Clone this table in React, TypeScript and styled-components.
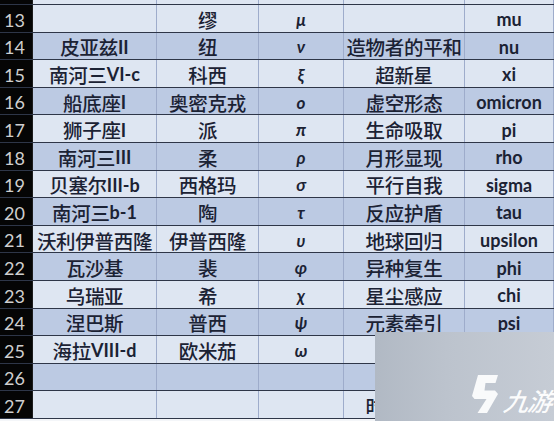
import React from 'react';
import styled, { createGlobalStyle } from 'styled-components';

const GlobalStyle = createGlobalStyle`
  html, body {
    margin: 0;
    padding: 0;
    background: #f4f6f9;
    overflow: hidden;
  }
`;

const Page = styled.div`
  position: relative;
  width: 554px;
  height: 421px;
  overflow: hidden;
  background: #f4f6f9;
`;

const Sheet = styled.div`
  display: flex;
  flex-direction: column;
  width: 600px;
`;

const Row = styled.div<{ $shade: boolean; $h: number }>`
  display: grid;
  grid-template-columns: 33px 124px 102px 85px 121px 89px 1fr;
  height: ${(p) => p.$h}px;
  background: ${(p) => (p.$shade ? '#bccae3' : '#dee6f2')};
  border-bottom: 1px solid #2e3648;
  box-sizing: border-box;
`;

const RowHead = styled.div`
  display: flex;
  align-items: flex-end;
  padding: 0 0 1px 4px;
  background: #050505;
  color: #cfcfcf;
  font-family: 'Lato', 'Liberation Sans', sans-serif;
  font-size: 18px;
  line-height: 22px;
  border-right: 1px solid #1c1c1c;
  overflow: hidden;
`;

const Cell = styled.div<{ $kind?: 'cn' | 'greek' | 'latin' }>`
  display: flex;
  align-items: center;
  justify-content: center;
  overflow: hidden;
  white-space: nowrap;
  border-right: 1px solid #9eaccb;
  color: #1b2234;
  font-family: ${(p) =>
    p.$kind === 'greek'
      ? "'Lato', 'DejaVu Sans', sans-serif"
      : "'Lato', 'Noto Sans CJK SC', sans-serif"};
  font-size: ${(p) => (p.$kind === 'greek' ? '17px' : p.$kind === 'latin' ? '18px' : '19.5px')};
  font-weight: ${(p) => (p.$kind === 'cn' ? 500 : 700)};
  font-style: ${(p) => (p.$kind === 'greek' ? 'italic' : 'normal')};
  letter-spacing: ${(p) => (p.$kind === 'cn' ? '-0.3px' : '0')};
  padding-top: 2px;
`;

const Latin = styled.span`
  font-family: 'Lato', 'Liberation Sans', sans-serif;
  font-weight: 700;
  font-size: 18px;
  letter-spacing: 0;
`;

// blurred watermark patch laid over the bottom-right corner of the photo
const Watermark = styled.div`
  position: absolute;
  left: 375px;
  top: 332px;
  width: 179px;
  height: 89px;
  box-sizing: border-box;
  display: flex;
  align-items: flex-end;
  justify-content: flex-end;
  gap: 6px;
  padding: 0 2px 8px 0;
  background-color: #bcc3cd;
  background-image: linear-gradient(90deg, #b1b9c4 0%, #bcc3cd 40%, #c6ccd5 100%);
  z-index: 2;
`;

const Brand = styled.span`
  color: #ffffff;
  font-family: 'Noto Sans CJK SC', sans-serif;
  font-size: 25px;
  font-weight: 500;
  font-style: italic;
  line-height: 26px;
  letter-spacing: -1px;
  transform: skewX(-8deg);
  opacity: 0.95;
`;

type RowData = [string, string, string, string, string];

const rows: RowData[] = [
  ['', '缪', 'μ', '', 'mu'],
  ['皮亚兹II', '纽', 'ν', '造物者的平和', 'nu'],
  ['南河三VI-c', '科西', 'ξ', '超新星', 'xi'],
  ['船底座I', '奥密克戎', 'ο', '虚空形态', 'omicron'],
  ['狮子座I', '派', 'π', '生命吸取', 'pi'],
  ['南河三III', '柔', 'ρ', '月形显现', 'rho'],
  ['贝塞尔III-b', '西格玛', 'σ', '平行自我', 'sigma'],
  ['南河三b-1', '陶', 'τ', '反应护盾', 'tau'],
  ['沃利伊普西隆', '伊普西隆', 'υ', '地球回归', 'upsilon'],
  ['瓦沙基', '裴', 'φ', '异种复生', 'phi'],
  ['乌瑞亚', '希', 'χ', '星尘感应', 'chi'],
  ['涅巴斯', '普西', 'ψ', '元素牵引', 'psi'],
  ['海拉VIII-d', '欧米茄', 'ω', '', ''],
  ['', '', '', '', ''],
  ['', '', '', '时间静止', ''],
];

// wrap latin runs (II, VI-c, b-1 ...) so they render bold like the sheet
const mixed = (text: string) =>
  text.split(/([A-Za-z0-9-]+)/).map((part, i) =>
    /^[A-Za-z0-9-]+$/.test(part) ? <Latin key={i}>{part}</Latin> : part
  );

const LogoMark = () => (
  <svg width="26" height="38" viewBox="0 0 26 38">
    <path
      d="M6 0 L26 0 L23.5 8 L13.5 8 L12.5 15.5 L23 15.5 L26 19 L15 38 L5.5 38 L14.5 24 L2.5 24 L0 21 Z"
      fill="#ffffff"
      opacity="0.9"
    />
  </svg>
);

const App: React.FC = () => {
  return (
    <Page>
      <GlobalStyle />
      <Sheet>
        <Row $shade={false} $h={5}>
          <RowHead />
          <Cell />
          <Cell />
          <Cell />
          <Cell />
          <Cell />
        </Row>
        {rows.map((r, i) => (
          <Row key={i} $shade={i % 2 === 1} $h={27.6}>
            <RowHead>{13 + i}</RowHead>
            <Cell $kind="cn">{mixed(r[0])}</Cell>
            <Cell $kind="cn">{r[1]}</Cell>
            <Cell $kind="greek">{r[2]}</Cell>
            <Cell $kind="cn">{r[3]}</Cell>
            <Cell $kind="latin">{r[4]}</Cell>
          </Row>
        ))}
      </Sheet>
      <Watermark>
        <LogoMark />
        <Brand>九游</Brand>
      </Watermark>
    </Page>
  );
};

export default App;
